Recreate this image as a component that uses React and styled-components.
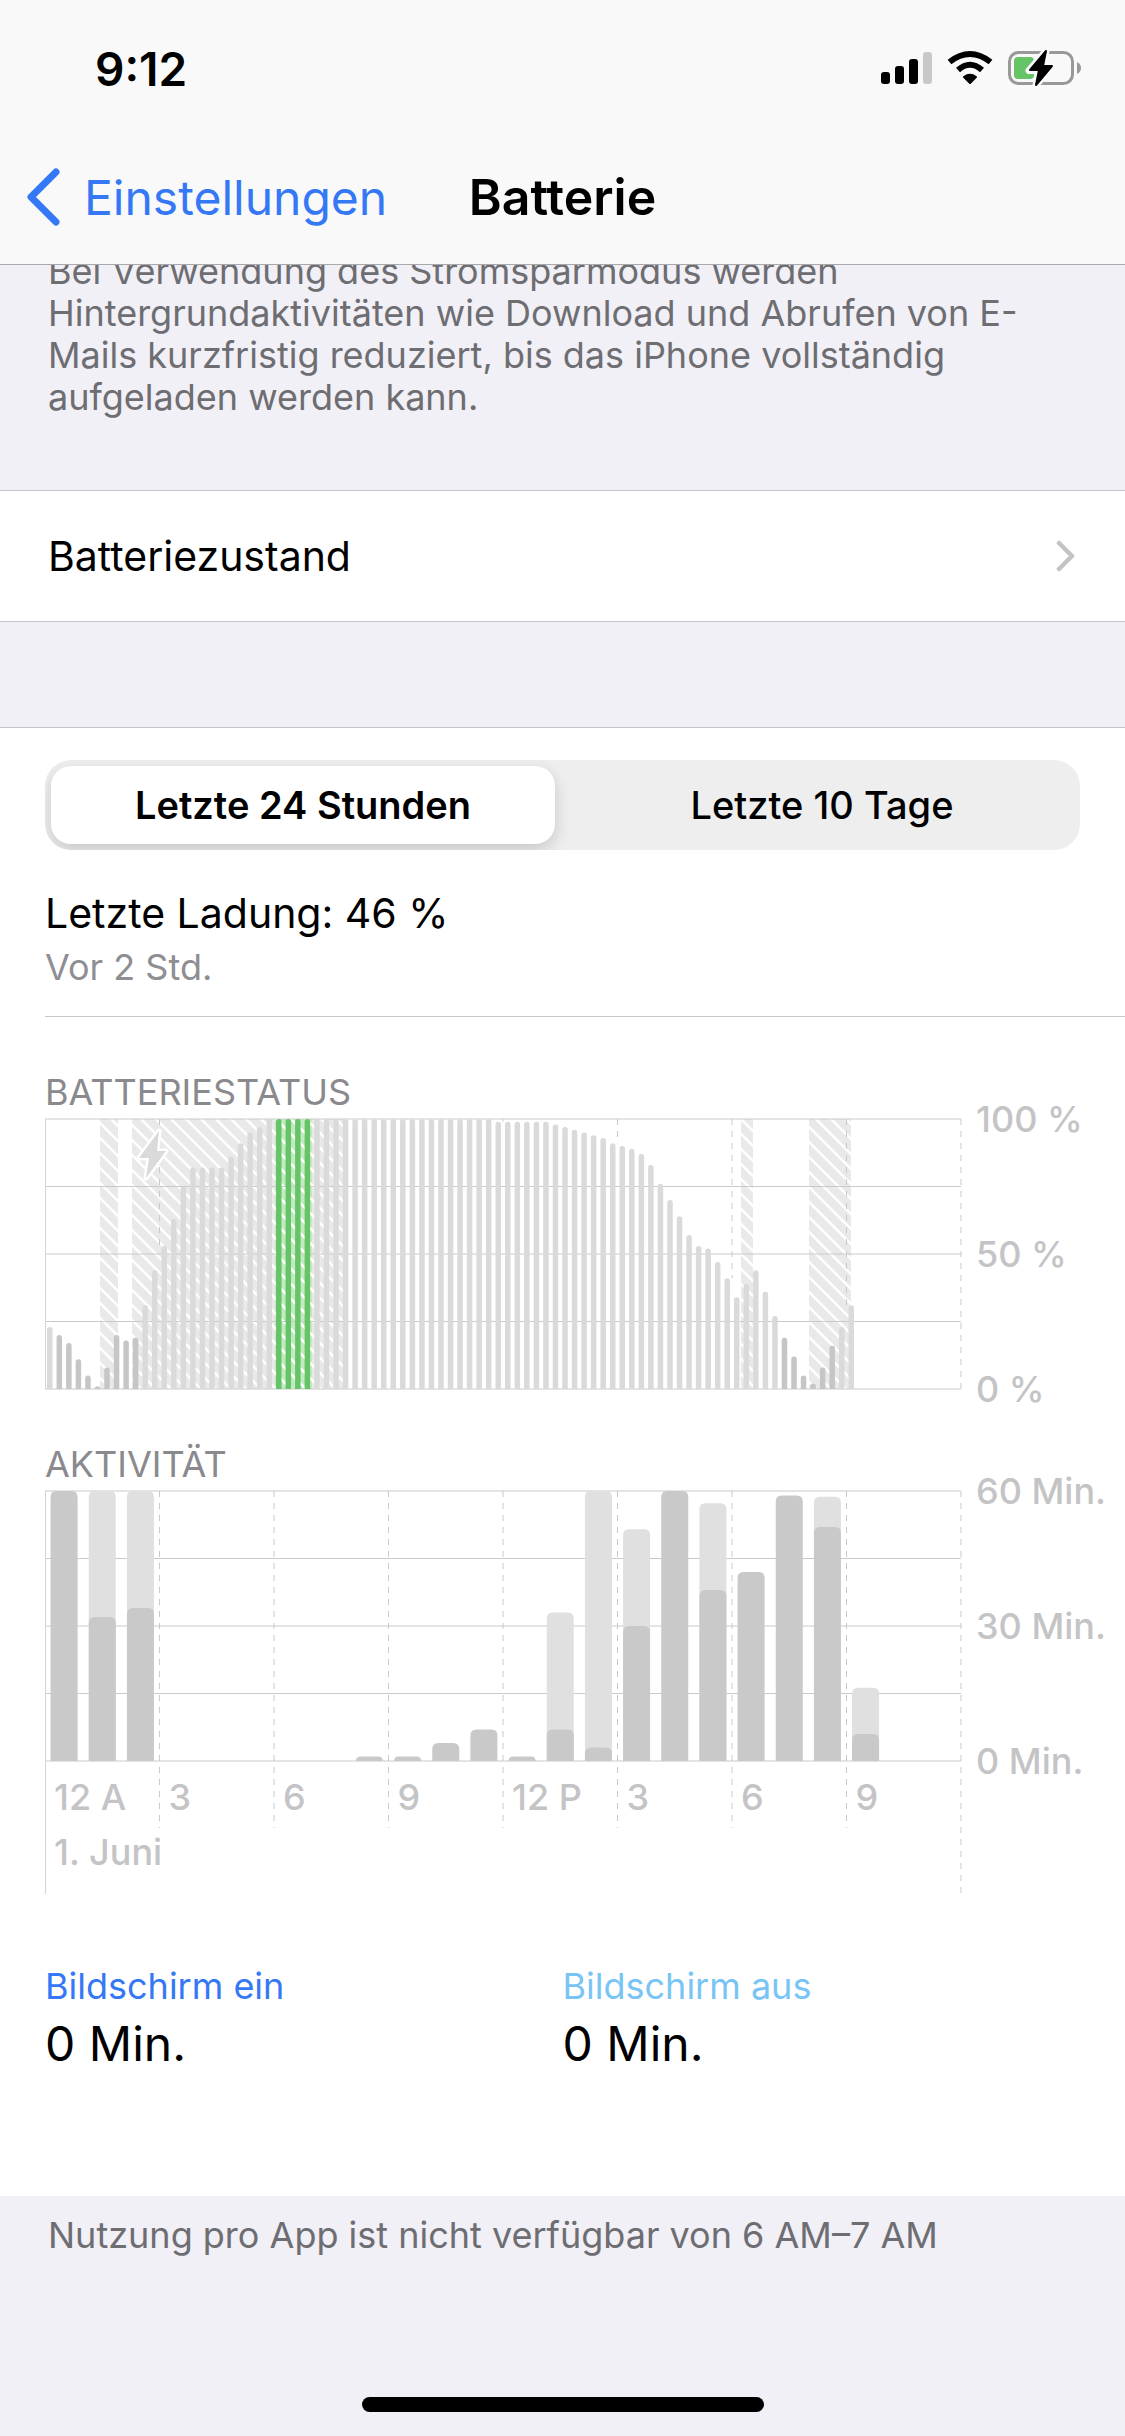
import React, { useState } from "react";
import styled, { createGlobalStyle, css } from "styled-components";

const HOURS = ["12 A", "3", "6", "9", "12 P", "3", "6", "9"];

const LEVELS = [
  23, 20, 17, 11, 5, 1, 8, 20, 18, 19, 31, 44, 53, 63, 75, 82, 82, 82, 82, 86,
  91, 95, 97, ...Array(24).fill(100), 99, 99, 99, 99, 99, 99, 98, 97, 96, 95,
  94, 93, 91, 90, 89, 87, 83, 76, 70, 64, 57, 53, 52, 47, 41, 34, 39, 44, 36,
  27, 19, 12, 5, 2, 8, 16, 23, 31,
];

// [screen on, total] in minutes, one entry per hour
const ACTIVITY = [
  [60, 60], [32, 60], [34, 60], [0, 0], [0, 0], [0, 0], [0, 0], [0, 0],
  [1, 1], [1, 1], [4, 4], [7, 7], [1, 1], [7, 33], [3, 60], [30, 51.5],
  [60, 60], [38, 57.3], [42, 42], [59, 59], [52, 58.7], [6, 16.3],
];

const CHARGING = [
  [55, 73],
  [87, 300],
  [696, 708],
  [764, 806],
];

const PLOT_WIDTH = 916;
const PLOT_HEIGHT = 270;
const STEP = PLOT_WIDTH / 96;
const HOUR = PLOT_WIDTH / 24;

const isSelected = (i) => i >= 24 && i < 28;

// bar with rounded top corners only
const barPath = (x, width, height, radius) => {
  const r = Math.min(radius, height);
  const top = PLOT_HEIGHT - height;
  return `M${x} ${PLOT_HEIGHT}V${top + r}Q${x} ${top} ${x + r} ${top}H${
    x + width - r
  }Q${x + width} ${top} ${x + width} ${top + r}V${PLOT_HEIGHT}Z`;
};

function GridLines() {
  return [0, 1, 2, 3, 4].map((i) => (
    <GridLine key={i} x1="0" x2={PLOT_WIDTH} y1={i * 67.5} y2={i * 67.5} />
  ));
}

function Hatch({ id, color }) {
  return (
    <pattern
      id={id}
      width="15"
      height="15"
      patternUnits="userSpaceOnUse"
      patternTransform="translate(0 9)"
    >
      <rect width="15" height="15" fill={color} />
      <path
        d="M-5 -5L20 20M-5 10L5 20M10 -5L20 5"
        stroke="#fff"
        strokeWidth="2.5"
      />
    </pattern>
  );
}

function BatteryChart() {
  // hour lines stop where the bars begin
  const lineEnd = (i) => {
    const next = LEVELS[i * 12];
    if (i === 0 || next === undefined) return PLOT_HEIGHT;
    const level = Math.max(LEVELS[i * 12 - 1], next);
    return PLOT_HEIGHT - (level / 100) * PLOT_HEIGHT;
  };
  return (
    <Plot
      viewBox={`0 0 ${PLOT_WIDTH} ${PLOT_HEIGHT}`}
      role="img"
      aria-label="Batteriestatus"
    >
      <defs>
        <Hatch id="hatch" color="#e9e9e9" />
        <Hatch id="hatchGreen" color="#c2ebc4" />
      </defs>
      {CHARGING.map(([from, to]) => (
        <rect
          key={from}
          x={from}
          width={to - from}
          height={PLOT_HEIGHT}
          fill="url(#hatch)"
        />
      ))}
      <rect x="230" width="37" height={PLOT_HEIGHT} fill="url(#hatchGreen)" />
      <GridLines />
      {[0, 1, 2, 3, 4, 5, 6, 7, 8].map((i) => (
        <HourLine
          key={i}
          x1={i * 114.5 || 0.5}
          x2={i * 114.5 || 0.5}
          y1="0"
          y2={lineEnd(i)}
        />
      ))}
      <EdgeLine x1="0.5" x2="0.5" y1="0" y2={PLOT_HEIGHT} />
      {LEVELS.map((level, i) => (
        <path
          key={i}
          d={barPath(
            (i + 0.5) * STEP - 2.75,
            5.5,
            (level / 100) * PLOT_HEIGHT,
            2.7
          )}
          fill={
            isSelected(i) ? "#66c466" : level <= 20 && i > 0 ? "#c6c6c7" : "#dadada"
          }
        />
      ))}
      <path
        d="M114 12L94 39H104L101 59L121 32H112Z"
        fill="#dadada"
        stroke="#fff"
        strokeWidth="5"
        strokeLinejoin="round"
        paintOrder="stroke"
      />
    </Plot>
  );
}

function ActivityChart() {
  return (
    <Plot
      viewBox={`0 0 ${PLOT_WIDTH} 403`}
      role="img"
      aria-label="Aktivität"
    >
      <GridLines />
      {[0, 1, 2, 3, 4, 5, 6, 7, 8].map((i) => (
        <HourLine
          key={i}
          x1={i * 114.5 || 0.5}
          x2={i * 114.5 || 0.5}
          y1="0"
          y2={i % 8 === 0 ? 403 : 337}
        />
      ))}
      <EdgeLine x1="0.5" x2="0.5" y1="0" y2="403" />
      {ACTIVITY.map(([on, total], i) => {
        const x = (i + 0.5) * HOUR - 13.5;
        return (
          <g key={i}>
            {total > on && (
              <path d={barPath(x, 27, total * 4.5, 6)} fill="#e0e0e0" />
            )}
            {on > 0 && <path d={barPath(x, 27, on * 4.5, 6)} fill="#c9c9c9" />}
          </g>
        );
      })}
      {HOURS.map((label, i) => (
        <AxisText key={i} x={i * 114.5 + 9} y="319">
          {label}
        </AxisText>
      ))}
      <AxisText x="9" y="374">
        1. Juni
      </AxisText>
    </Plot>
  );
}

function StatusIcons() {
  return (
    <StatusSvg width="202" height="36" viewBox="0 0 202 36" aria-hidden="true">
      <rect x="0" y="21" width="9" height="12" rx="3" />
      <rect x="14" y="15" width="9" height="18" rx="3" />
      <rect x="28" y="8" width="9" height="25" rx="3" />
      <rect x="42" y="1" width="9" height="32" rx="3" fill="#c8c8c8" />
      <path
        d="M89 32L83 26Q89 21.500 95 26Z"
        stroke="#000"
        strokeWidth="2"
        strokeLinejoin="round"
      />
      <path
        d="M77 19Q89 8.500 101 19"
        fill="none"
        stroke="#000"
        strokeWidth="6"
      />
      <path
        d="M68.500 11Q89 -5 109.500 11"
        fill="none"
        stroke="#000"
        strokeWidth="6"
      />
      <rect
        x="128.5"
        y="1.5"
        width="63"
        height="31"
        rx="9"
        fill="none"
        stroke="#999"
        strokeWidth="3"
      />
      <path d="M196 11Q200 13 200 17T196 23Z" fill="#999" />
      <rect x="133" y="6" width="20" height="22" rx="4" fill="#66c466" />
      <path
        d="M165 0L148 19.500H158L155 34L172 14.500H162Z"
        stroke="#fafafa"
        strokeWidth="7"
        strokeLinejoin="round"
      />
      <path
        d="M165 0L149 19H158L155 34L171 15H162Z"
        stroke="#000"
        strokeWidth="2"
        strokeLinejoin="round"
      />
    </StatusSvg>
  );
}

function App() {
  const [range, setRange] = useState("24h");
  return (
    <Page>
      <GlobalStyle />
      <Header>
        <StatusBar>
          <Clock>9:12</Clock>
          <StatusIcons />
        </StatusBar>
        <NavBar>
          <BackLink href="#settings">
            <svg width="34" height="58" viewBox="0 0 34 58" aria-hidden="true">
              <path
                d="M30 4L5 29L30 54"
                fill="none"
                stroke="currentColor"
                strokeWidth="7"
                strokeLinecap="round"
                strokeLinejoin="round"
              />
            </svg>
            Einstellungen
          </BackLink>
          <Title>Batterie</Title>
          <span />
        </NavBar>
      </Header>
      <Intro>
        <Note>
          Bei Verwendung des Stromsparmodus werden Hintergrundaktivitäten wie
          Download und Abrufen von E-Mails kurzfristig reduziert, bis das iPhone
          vollständig aufgeladen werden kann.
        </Note>
      </Intro>
      <HealthRow href="#health">
        Batteriezustand
        <svg width="20" height="32" viewBox="0 0 20 32" aria-hidden="true">
          <path
            d="M4 3L17 16L4 29"
            fill="none"
            stroke="#c4c4c6"
            strokeWidth="4.5"
            strokeLinecap="round"
            strokeLinejoin="round"
          />
        </svg>
      </HealthRow>
      <Panel>
        <Segments>
          <Segment $active={range === "24h"} onClick={() => setRange("24h")}>
            Letzte 24 Stunden
          </Segment>
          <Segment $active={range === "10d"} onClick={() => setRange("10d")}>
            Letzte 10 Tage
          </Segment>
        </Segments>
        <LastCharge>
          <ChargeTitle>Letzte Ladung: 46 %</ChargeTitle>
          <ChargeTime>Vor 2 Std.</ChargeTime>
        </LastCharge>
        <ChartTitle>BATTERIESTATUS</ChartTitle>
        <ChartRow>
          <BatteryChart />
          <Scale>
            <span>100 %</span>
            <span>50 %</span>
            <span>0 %</span>
          </Scale>
        </ChartRow>
        <ChartTitle>AKTIVITÄT</ChartTitle>
        <ChartRow>
          <ActivityChart />
          <Scale>
            <span>60 Min.</span>
            <span>30 Min.</span>
            <span>0 Min.</span>
          </Scale>
        </ChartRow>
        <Totals>
          <div>
            <TotalLabel $color="#3478f6">Bildschirm ein</TotalLabel>
            <TotalValue>0 Min.</TotalValue>
          </div>
          <div>
            <TotalLabel $color="#78c5f5">Bildschirm aus</TotalLabel>
            <TotalValue>0 Min.</TotalValue>
          </div>
        </Totals>
      </Panel>
      <Footer>
        <Note>Nutzung pro App ist nicht verfügbar von 6 AM–7 AM</Note>
        <HomeIndicator />
      </Footer>
    </Page>
  );
}

export default App;

const GlobalStyle = createGlobalStyle`
  * {
    box-sizing: border-box;
  }
  body {
    margin: 0;
    background: #f1f0f6;
    color: #000;
    font-family: Inter, "Liberation Sans", sans-serif;
  }
  h1, h2, p {
    margin: 0;
  }
`;

const Page = styled.main`
  display: flex;
  flex-direction: column;
  min-height: 100vh;
`;

const Header = styled.header`
  position: sticky;
  top: 0;
  z-index: 1;
  background: #f9f9f9;
  border-bottom: 1px solid #a9a9ac;
`;

const StatusBar = styled.div`
  display: flex;
  justify-content: space-between;
  align-items: center;
  height: 132px;
  padding: 6px 42px 0 95px;
`;

const Clock = styled.span`
  font-size: 46px;
  font-weight: 600;
`;

const StatusSvg = styled.svg`
  overflow: visible;
`;

const NavBar = styled.nav`
  display: grid;
  grid-template-columns: 1fr auto 1fr;
  align-items: center;
  height: 132px;
  padding: 0 26px 2px;
`;

const BackLink = styled.a`
  display: flex;
  align-items: center;
  gap: 24px;
  font-size: 48px;
  color: #3478f6;
  text-decoration: none;
`;

const Title = styled.h1`
  font-size: 50px;
  font-weight: 600;
`;

const Intro = styled.section`
  display: flex;
  flex-direction: column;
  justify-content: flex-end;
  height: 225px;
  padding: 0 48px 72px;
`;

const Note = styled.p`
  font-size: 36px;
  line-height: 42px;
  color: #6d6d72;
`;

const HealthRow = styled.a`
  display: flex;
  justify-content: space-between;
  align-items: center;
  height: 132px;
  padding: 0 50px 0 48px;
  background: #fff;
  border-top: 1px solid #c6c6c8;
  border-bottom: 1px solid #c6c6c8;
  font-size: 41px;
  color: #000;
  text-decoration: none;
`;

const Panel = styled.section`
  margin-top: 105px;
  padding: 32px 0 118px 45px;
  background: #fff;
  border-top: 1px solid #c6c6c8;
`;

const Segments = styled.div`
  display: grid;
  grid-template-columns: 1fr 1fr;
  gap: 15px;
  height: 90px;
  margin-right: 45px;
  padding: 6px;
  border-radius: 26px;
  background: #eeeeef;
  overflow: hidden;
`;

const Segment = styled.button`
  padding: 0;
  border: 0;
  border-radius: 20px;
  background: none;
  color: #000;
  font-family: inherit;
  font-size: 38px;
  font-weight: 500;
  ${(props) =>
    props.$active &&
    css`
      background: #fff;
      font-weight: 600;
      box-shadow: 0 6px 16px rgba(0, 0, 0, 0.16);
    `}
`;

const LastCharge = styled.div`
  padding: 36px 0 22px;
  border-bottom: 1px solid #c6c6c8;
`;

const ChargeTitle = styled.h2`
  font-size: 41px;
  font-weight: 400;
  line-height: 54px;
`;

const ChargeTime = styled.p`
  font-size: 36px;
  line-height: 54px;
  color: #8e8e93;
`;

const ChartTitle = styled.h2`
  padding: 51px 0 3px;
  font-size: 36px;
  font-weight: 400;
  line-height: 48px;
  color: #8a8a8e;
`;

const ChartRow = styled.div`
  display: flex;
`;

const Plot = styled.svg`
  flex: 1;
  min-width: 0;
  overflow: visible;
`;

const GridLine = styled.line`
  stroke: #cacaca;
  stroke-width: 1px;
`;

const HourLine = styled.line`
  stroke: #c9c9ca;
  stroke-width: 1px;
  stroke-dasharray: 6px 6px;
`;

const EdgeLine = styled.line`
  stroke: #d4d4d4;
  stroke-width: 1px;
`;

const AxisText = styled.text`
  font-size: 36px;
  font-weight: 500;
  fill: #c4c4c6;
`;

const Scale = styled.div`
  display: flex;
  flex-direction: column;
  justify-content: space-between;
  width: 164px;
  height: 312px;
  margin: -21px 0;
  padding-left: 15px;
  font-size: 36px;
  font-weight: 500;
  line-height: 42px;
  color: #c4c4c6;
  white-space: nowrap;
`;

const Totals = styled.div`
  display: grid;
  grid-template-columns: 1fr 1fr;
  margin-right: 45px;
  padding-top: 68px;
`;

const TotalLabel = styled.p`
  font-size: 36px;
  line-height: 48px;
  color: ${(props) => props.$color};
`;

const TotalValue = styled.p`
  font-size: 48px;
  line-height: 68px;
`;

const Footer = styled.footer`
  flex: 1;
  display: flex;
  flex-direction: column;
  justify-content: space-between;
  padding: 18px 48px 24px;
`;

const HomeIndicator = styled.div`
  align-self: center;
  width: 402px;
  height: 15px;
  border-radius: 8px;
  background: #000;
`;
